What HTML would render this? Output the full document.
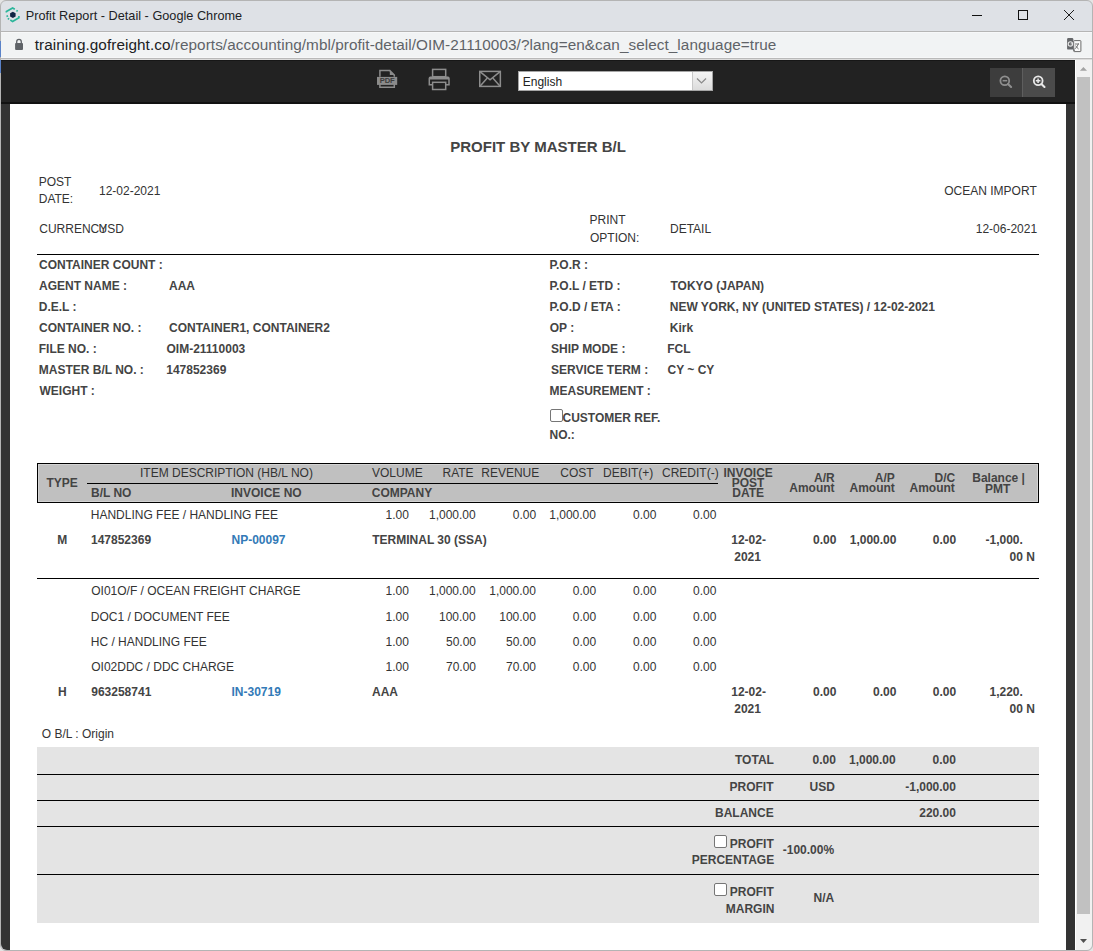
<!DOCTYPE html>
<html><head><meta charset="utf-8">
<style>
html,body{margin:0;padding:0;}
body{width:1093px;height:951px;overflow:hidden;position:relative;background:#e4e4e4;font-family:"Liberation Sans",sans-serif;}
.t{position:absolute;line-height:20px;white-space:pre;font-family:"Liberation Sans",sans-serif;}
.abs{position:absolute;}
#win{position:absolute;left:0;top:0;width:1091px;height:949px;background:#dee1e6;border-radius:6px;border:1px solid #b4b4b4;}
#addr{position:absolute;left:1px;top:32px;width:1091px;height:26px;background:#f1f3f4;}
#tb{position:absolute;left:1px;top:60px;width:1074px;height:42px;background:#222;border-top:1px solid #171717;box-sizing:border-box;}
#tbb{position:absolute;left:1px;top:102px;width:1074px;height:2px;background:#111;}
#lbar{position:absolute;left:1px;top:104px;width:9px;height:846px;background:#333;border-bottom-left-radius:6px;}
#rbar{position:absolute;left:1066px;top:104px;width:9px;height:846px;background:#333;}
#paper{position:absolute;left:10px;top:104px;width:1056px;height:846px;background:#fff;}
#sb{position:absolute;left:1075px;top:60px;width:16px;height:890px;background:#f1f1f1;border-bottom-right-radius:6px;border-left:1px solid #fff;}
#thumb{position:absolute;left:1077px;top:77px;width:13px;height:837px;background:#c1c1c1;}
.hl{position:absolute;height:1px;background:#000;}
#thead{position:absolute;left:37px;top:463px;width:1000px;height:38px;background:#c0c0c0;border:1px solid #000;box-shadow:inset 0 0 0 1px #d4d4d4;}
#sum{position:absolute;left:37px;top:747px;width:1002px;height:176px;background:#e4e4e4;}
.cb{position:absolute;width:11px;height:11px;border:1px solid #767676;border-radius:2px;background:#fff;box-sizing:content-box;}
#sel{position:absolute;left:518px;top:71px;width:193px;height:18px;background:#fff;border:1px solid #a6a6a6;}
#selbtn{position:absolute;left:692px;top:72px;width:19px;height:18px;background:linear-gradient(#f4f4f4,#dcdcdc);border-left:1px solid #c8c8c8;}
#zo{position:absolute;left:990px;top:68px;width:32px;height:29px;background:#3d3d3d;}
#zsep{position:absolute;left:1022px;top:68px;width:1px;height:29px;background:#5e5e5e;}
#zi{position:absolute;left:1023px;top:68px;width:32px;height:29px;background:#4b4b4b;}
</style></head><body>
<div id="win"></div>
<div class="abs" style="left:1px;top:31px;width:1091px;height:1px;background:#b5b5b5"></div>
<div id="addr"></div><div class="abs" style="left:0;top:41px;width:1px;height:16px;background:#5a82c8"></div><div class="abs" style="left:0;top:60px;width:1px;height:13px;background:#5a82c8"></div><div class="abs" style="left:1px;top:32px;width:1091px;height:1px;background:#f7f8f9"></div>
<div class="abs" style="left:1px;top:57px;width:1091px;height:1px;background:#f6f7f8"></div><div class="abs" style="left:1px;top:58px;width:1091px;height:1px;background:#b9b9b9"></div><div class="abs" style="left:1px;top:59px;width:1091px;height:1px;background:#dcdcdc"></div>
<div id="tb"></div>
<div id="tbb"></div>
<div id="lbar"></div>
<div id="rbar"></div>
<div id="paper"></div>
<div id="sb"></div>
<div id="thumb"></div>
<!-- scrollbar arrows -->
<svg class="abs" style="left:1075px;top:62px" width="16" height="12"><path d="M4.9 8.8 L8.45 4.9 L12 8.8 Z" fill="#a3a3a3"/></svg>
<svg class="abs" style="left:1075px;top:935px" width="16" height="12"><path d="M5 4 L8.5 8 L12 4 Z" fill="#505050"/></svg>
<!-- favicon -->
<svg class="abs" style="left:0;top:0" width="30" height="30" viewBox="0 0 30 30">
 <g fill="none" stroke="#2bb59a" stroke-width="1.7">
  <path d="M6.4 12.6 L6.4 11.5 L12.6 7.9 L14.8 9.2"/>
  <path d="M16.4 10.5 L17.7 11.3"/>
  <path d="M6.9 15.4 L7.6 16.8"/>
  <path d="M7.8 18.4 L9.1 19.2"/>
  <path d="M10.3 20.1 L12.6 21.4 L18.9 17.7 L18.9 16"/>
 </g>
 <path d="M12.85 11.7 L15.6 13.3 L15.6 16.5 L12.85 18.1 L10.1 16.5 L10.1 13.3 Z" fill="#0f2444"/>
</svg>
<!-- window controls -->
<div class="abs" style="left:972px;top:15px;width:10px;height:1px;background:#111"></div>
<div class="abs" style="left:1018px;top:10px;width:8px;height:8px;border:1px solid #111"></div>
<svg class="abs" style="left:1063px;top:9px" width="12" height="12"><path d="M1 1 L11 11 M11 1 L1 11" stroke="#111" stroke-width="0.95"/></svg>
<!-- lock -->
<svg class="abs" style="left:14px;top:38px" width="10" height="13" viewBox="0 0 10 13">
 <path d="M2.7 5.6 V3.7 A2.3 2.3 0 0 1 7.3 3.7 V5.6" fill="none" stroke="#5f6368" stroke-width="1.3"/>
 <rect x="1.1" y="5.1" width="7.9" height="6.9" rx="0.9" fill="#5f6368"/>
</svg>
<div class="t" style="left:34.8px;top:35px;font-size:15.3px;color:#5f6368;letter-spacing:0.063px"><span style="color:#202124">training.gofreight.co</span>/reports/accounting/mbl/profit-detail/OIM-21110003/?lang=en&amp;can_select_language=true</div>
<!-- translate icon -->
<svg class="abs" style="left:1066px;top:37px" width="16" height="16" viewBox="0 0 16 16">
 <rect x="7.7" y="3.6" width="7.2" height="11" rx="0.6" fill="#fafafa" stroke="#6a6a6a" stroke-width="1"/>
 <path d="M9 7 H13 M12.5 6.5 Q11.5 10 8.7 12 M9.6 8.6 Q11 11 12.6 12" stroke="#6a6a6a" stroke-width="0.9" fill="none"/>
 <rect x="1.1" y="1" width="6.2" height="11.6" rx="1.2" fill="#65676a"/>
 <path d="M7 12.4 L8.8 14.6 L8.8 12.4 Z" fill="#65676a"/>
 <circle cx="4.4" cy="6.9" r="2.2" fill="none" stroke="#e6e6e6" stroke-width="1.1"/>
 <path d="M4.6 6.9 H6.7" stroke="#e6e6e6" stroke-width="0.9"/>
</svg>
<!-- toolbar icons -->
<svg class="abs" style="left:374px;top:67px" width="26" height="24" viewBox="0 0 26 24">
 <path d="M5.9 17 V20.2 H20.3 V17 M5.9 9.8 V3.6 H15.8 L20.3 8.1 V9.8" fill="none" stroke="#8b8b8b" stroke-width="1.5"/>
 <path d="M15.8 3.6 V8.1 H20.3 Z" fill="#8b8b8b"/>
 <rect x="3" y="9.9" width="20.2" height="8" fill="#8b8b8b"/>
 <text x="13.1" y="16.3" font-family="Liberation Sans" font-size="7.6" font-weight="700" fill="#3c3c3c" text-anchor="middle" letter-spacing="-0.2">PDF</text>
</svg>
<svg class="abs" style="left:426px;top:66px" width="26" height="26" viewBox="0 0 26 26">
 <g fill="none" stroke="#8d8d8d" stroke-width="1.5">
  <rect x="6.6" y="3.4" width="13.1" height="7.3"/>
  <path d="M6.6 18.8 H3.3 V12.4 Q3.3 11.2 4.5 11.2 H21.8 Q23 11.2 23 12.4 V18.8 H19.7"/>
  <rect x="6.6" y="16.3" width="13.1" height="7.2"/>
 </g>
 <rect x="3.3" y="10.9" width="19.7" height="2.6" fill="#8d8d8d"/>
</svg>
<svg class="abs" style="left:476px;top:68px" width="28" height="22" viewBox="0 0 28 22">
 <g fill="none" stroke="#8d8d8d" stroke-width="1.5">
  <rect x="3.75" y="3.4" width="20.6" height="15"/>
  <path d="M4 3.6 L14.05 11.9 L24.1 3.6"/>
  <path d="M4 18.2 L11.3 10.1 M24.1 18.2 L16.8 10.1"/>
 </g>
</svg>
<div id="sel"></div>
<div id="selbtn"></div>
<svg class="abs" style="left:695px;top:76px" width="13" height="10"><path d="M2 2.5 L6.5 7 L11 2.5" fill="none" stroke="#8a8a8a" stroke-width="1.2"/></svg>
<div id="zo"></div><div id="zsep"></div><div id="zi"></div>
<svg class="abs" style="left:996px;top:72px" width="20" height="20" viewBox="0 0 20 20">
 <circle cx="8.8" cy="8.8" r="4.4" fill="none" stroke="#8f8f8f" stroke-width="1.8"/>
 <path d="M12 12 L15.1 15" stroke="#8f8f8f" stroke-width="2.1" stroke-linecap="round"/>
 <path d="M6.6 8.7 H11.2" stroke="#8f8f8f" stroke-width="1.5"/>
</svg>
<svg class="abs" style="left:1029px;top:72px" width="20" height="20" viewBox="0 0 20 20">
 <circle cx="9.2" cy="8.8" r="4.4" fill="none" stroke="#e8e8e8" stroke-width="1.8"/>
 <path d="M12.4 12 L15.5 15" stroke="#e8e8e8" stroke-width="2.1" stroke-linecap="round"/>
 <path d="M6.8 8.7 H11.4 M9.1 6.4 V11" stroke="#e8e8e8" stroke-width="1.5"/>
</svg>
<!-- page shapes -->
<div class="hl" style="left:37px;top:254px;width:1002px"></div>
<div class="cb" style="left:550px;top:409px"></div>
<div id="thead"></div>
<div class="hl" style="left:87px;top:483px;width:631px"></div>
<div class="hl" style="left:37px;top:578px;width:1002px"></div>
<div id="sum"></div>
<div class="hl" style="left:37px;top:774px;width:1002px"></div>
<div class="hl" style="left:37px;top:800px;width:1002px"></div>
<div class="hl" style="left:37px;top:826px;width:1002px"></div>
<div class="hl" style="left:37px;top:874px;width:1002px"></div>
<div class="cb" style="left:714px;top:835px"></div>
<div class="cb" style="left:714px;top:883px"></div>
<div class="t" style="left:25.75px;top:6px;font-size:12.7px;font-weight:400;color:#202124;letter-spacing:0.017px;">Profit Report - Detail - Google Chrome</div>
<div class="t" style="left:522.75px;top:72px;font-size:12px;font-weight:400;color:#222;">English</div>
<div class="t" style="left:450.25px;top:137px;font-size:15px;font-weight:700;color:#444;">PROFIT BY MASTER B/L</div>
<div class="t" style="left:38.75px;top:172px;font-size:12px;font-weight:400;color:#333;">POST</div>
<div class="t" style="left:38.75px;top:189px;font-size:12px;font-weight:400;color:#333;">DATE:</div>
<div class="t" style="left:99.0px;top:181px;font-size:12px;font-weight:400;color:#333;">12-02-2021</div>
<div class="t" style="left:39.25px;top:219px;font-size:12px;font-weight:400;color:#333;">CURRENCY</div>
<div class="t" style="left:98.5px;top:219px;font-size:12px;font-weight:400;color:#333;">USD</div>
<div class="t" style="left:589.5px;top:210px;font-size:12px;font-weight:400;color:#333;">PRINT</div>
<div class="t" style="left:590.0px;top:228px;font-size:12px;font-weight:400;color:#333;">OPTION:</div>
<div class="t" style="left:670.0px;top:219px;font-size:12px;font-weight:400;color:#333;">DETAIL</div>
<div class="t" style="left:944.25px;top:181px;font-size:12px;font-weight:400;color:#333;">OCEAN IMPORT</div>
<div class="t" style="left:975.75px;top:219px;font-size:12px;font-weight:400;color:#333;">12-06-2021</div>
<div class="t" style="left:39.0px;top:255px;font-size:12px;font-weight:700;color:#444;">CONTAINER COUNT :</div>
<div class="t" style="left:39.0px;top:276px;font-size:12px;font-weight:700;color:#444;">AGENT NAME :</div>
<div class="t" style="left:169.0px;top:276px;font-size:12px;font-weight:700;color:#444;">AAA</div>
<div class="t" style="left:38.75px;top:297px;font-size:12px;font-weight:700;color:#444;">D.E.L :</div>
<div class="t" style="left:39.0px;top:318px;font-size:12px;font-weight:700;color:#444;">CONTAINER NO. :</div>
<div class="t" style="left:169.0px;top:318px;font-size:12px;font-weight:700;color:#444;">CONTAINER1, CONTAINER2</div>
<div class="t" style="left:38.75px;top:339px;font-size:12px;font-weight:700;color:#444;">FILE NO. :</div>
<div class="t" style="left:166.5px;top:339px;font-size:12px;font-weight:700;color:#444;">OIM-21110003</div>
<div class="t" style="left:38.75px;top:360px;font-size:12px;font-weight:700;color:#444;">MASTER B/L NO. :</div>
<div class="t" style="left:166.25px;top:360px;font-size:12px;font-weight:700;color:#444;">147852369</div>
<div class="t" style="left:39.5px;top:381px;font-size:12px;font-weight:700;color:#444;">WEIGHT :</div>
<div class="t" style="left:549.5px;top:255px;font-size:12px;font-weight:700;color:#444;">P.O.R :</div>
<div class="t" style="left:549.5px;top:276px;font-size:12px;font-weight:700;color:#444;">P.O.L / ETD :</div>
<div class="t" style="left:670.5px;top:276px;font-size:12px;font-weight:700;color:#444;">TOKYO (JAPAN)</div>
<div class="t" style="left:549.5px;top:297px;font-size:12px;font-weight:700;color:#444;">P.O.D / ETA :</div>
<div class="t" style="left:669.75px;top:297px;font-size:12px;font-weight:700;color:#444;">NEW YORK, NY (UNITED STATES) / 12-02-2021</div>
<div class="t" style="left:549.75px;top:318px;font-size:12px;font-weight:700;color:#444;">OP :</div>
<div class="t" style="left:669.75px;top:318px;font-size:12px;font-weight:700;color:#444;">Kirk</div>
<div class="t" style="left:551.0px;top:339px;font-size:12px;font-weight:700;color:#444;">SHIP MODE :</div>
<div class="t" style="left:667.25px;top:339px;font-size:12px;font-weight:700;color:#444;">FCL</div>
<div class="t" style="left:551.0px;top:360px;font-size:12px;font-weight:700;color:#444;">SERVICE TERM :</div>
<div class="t" style="left:667.5px;top:360px;font-size:12px;font-weight:700;color:#444;">CY ~ CY</div>
<div class="t" style="left:549.5px;top:381px;font-size:12px;font-weight:700;color:#444;">MEASUREMENT :</div>
<div class="t" style="left:562.5px;top:408px;font-size:12px;font-weight:700;color:#444;">CUSTOMER REF.</div>
<div class="t" style="left:549.5px;top:425px;font-size:12px;font-weight:700;color:#444;">NO.:</div>
<div class="t" style="left:46.5px;top:473px;font-size:12px;font-weight:700;color:#444;">TYPE</div>
<div class="t" style="left:140.0px;top:463px;font-size:12px;font-weight:400;color:#333;">ITEM DESCRIPTION (HB/L NO)</div>
<div class="t" style="left:372.0px;top:463px;font-size:12px;font-weight:400;color:#333;">VOLUME</div>
<div class="t" style="left:442.5px;top:463px;font-size:12px;font-weight:400;color:#333;">RATE</div>
<div class="t" style="left:481.25px;top:463px;font-size:12px;font-weight:400;color:#333;">REVENUE</div>
<div class="t" style="left:560.25px;top:463px;font-size:12px;font-weight:400;color:#333;">COST</div>
<div class="t" style="left:603.0px;top:463px;font-size:12px;font-weight:400;color:#333;">DEBIT(+)</div>
<div class="t" style="left:662.0px;top:463px;font-size:12px;font-weight:400;color:#333;">CREDIT(-)</div>
<div class="t" style="left:91.0px;top:483px;font-size:12px;font-weight:700;color:#444;">B/L NO</div>
<div class="t" style="left:231.0px;top:483px;font-size:12px;font-weight:700;color:#444;">INVOICE NO</div>
<div class="t" style="left:371.75px;top:483px;font-size:12px;font-weight:700;color:#444;">COMPANY</div>
<div class="t" style="left:723.5px;top:463px;font-size:12px;font-weight:700;color:#444;">INVOICE</div>
<div class="t" style="left:731.75px;top:473px;font-size:12px;font-weight:700;color:#444;">POST</div>
<div class="t" style="left:732.25px;top:483px;font-size:12px;font-weight:700;color:#444;">DATE</div>
<div class="t" style="left:814.0px;top:468px;font-size:12px;font-weight:700;color:#444;">A/R</div>
<div class="t" style="left:789.25px;top:478px;font-size:12px;font-weight:700;color:#444;">Amount</div>
<div class="t" style="left:874.75px;top:468px;font-size:12px;font-weight:700;color:#444;">A/P</div>
<div class="t" style="left:849.5px;top:478px;font-size:12px;font-weight:700;color:#444;">Amount</div>
<div class="t" style="left:934.5px;top:468px;font-size:12px;font-weight:700;color:#444;">D/C</div>
<div class="t" style="left:909.5px;top:478px;font-size:12px;font-weight:700;color:#444;">Amount</div>
<div class="t" style="left:972.25px;top:468px;font-size:12px;font-weight:700;color:#444;">Balance |</div>
<div class="t" style="left:985.0px;top:479px;font-size:12px;font-weight:700;color:#444;">PMT</div>
<div class="t" style="left:90.75px;top:505px;font-size:12px;font-weight:400;color:#333;">HANDLING FEE / HANDLING FEE</div>
<div class="t" style="left:385.5px;top:505px;font-size:12px;font-weight:400;color:#333;">1.00</div>
<div class="t" style="left:429.0px;top:505px;font-size:12px;font-weight:400;color:#333;">1,000.00</div>
<div class="t" style="left:512.75px;top:505px;font-size:12px;font-weight:400;color:#333;">0.00</div>
<div class="t" style="left:549.25px;top:505px;font-size:12px;font-weight:400;color:#333;">1,000.00</div>
<div class="t" style="left:633.0px;top:505px;font-size:12px;font-weight:400;color:#333;">0.00</div>
<div class="t" style="left:693.0px;top:505px;font-size:12px;font-weight:400;color:#333;">0.00</div>
<div class="t" style="left:57.25px;top:530px;font-size:12px;font-weight:700;color:#444;">M</div>
<div class="t" style="left:91.0px;top:530px;font-size:12px;font-weight:700;color:#444;">147852369</div>
<div class="t" style="left:231.5px;top:530px;font-size:12px;font-weight:700;color:#337ab7;">NP-00097</div>
<div class="t" style="left:372.25px;top:530px;font-size:12px;font-weight:700;color:#444;">TERMINAL 30 (SSA)</div>
<div class="t" style="left:731.25px;top:530px;font-size:12px;font-weight:700;color:#444;">12-02-</div>
<div class="t" style="left:734.25px;top:547px;font-size:12px;font-weight:700;color:#444;">2021</div>
<div class="t" style="left:813.0px;top:530px;font-size:12px;font-weight:700;color:#444;">0.00</div>
<div class="t" style="left:849.75px;top:530px;font-size:12px;font-weight:700;color:#444;">1,000.00</div>
<div class="t" style="left:932.75px;top:530px;font-size:12px;font-weight:700;color:#444;">0.00</div>
<div class="t" style="left:985.5px;top:530px;font-size:12px;font-weight:700;color:#444;">-1,000.</div>
<div class="t" style="left:1009.5px;top:547px;font-size:12px;font-weight:700;color:#444;">00 N</div>
<div class="t" style="left:91.25px;top:581px;font-size:12px;font-weight:400;color:#333;">OI01O/F / OCEAN FREIGHT CHARGE</div>
<div class="t" style="left:385.5px;top:581px;font-size:12px;font-weight:400;color:#333;">1.00</div>
<div class="t" style="left:429.0px;top:581px;font-size:12px;font-weight:400;color:#333;">1,000.00</div>
<div class="t" style="left:489.25px;top:581px;font-size:12px;font-weight:400;color:#333;">1,000.00</div>
<div class="t" style="left:572.75px;top:581px;font-size:12px;font-weight:400;color:#333;">0.00</div>
<div class="t" style="left:633.0px;top:581px;font-size:12px;font-weight:400;color:#333;">0.00</div>
<div class="t" style="left:693.0px;top:581px;font-size:12px;font-weight:400;color:#333;">0.00</div>
<div class="t" style="left:90.75px;top:607px;font-size:12px;font-weight:400;color:#333;">DOC1 / DOCUMENT FEE</div>
<div class="t" style="left:385.5px;top:607px;font-size:12px;font-weight:400;color:#333;">1.00</div>
<div class="t" style="left:439.0px;top:607px;font-size:12px;font-weight:400;color:#333;">100.00</div>
<div class="t" style="left:499.25px;top:607px;font-size:12px;font-weight:400;color:#333;">100.00</div>
<div class="t" style="left:572.75px;top:607px;font-size:12px;font-weight:400;color:#333;">0.00</div>
<div class="t" style="left:633.0px;top:607px;font-size:12px;font-weight:400;color:#333;">0.00</div>
<div class="t" style="left:693.0px;top:607px;font-size:12px;font-weight:400;color:#333;">0.00</div>
<div class="t" style="left:90.75px;top:632px;font-size:12px;font-weight:400;color:#333;">HC / HANDLING FEE</div>
<div class="t" style="left:385.5px;top:632px;font-size:12px;font-weight:400;color:#333;">1.00</div>
<div class="t" style="left:446.0px;top:632px;font-size:12px;font-weight:400;color:#333;">50.00</div>
<div class="t" style="left:506.0px;top:632px;font-size:12px;font-weight:400;color:#333;">50.00</div>
<div class="t" style="left:572.75px;top:632px;font-size:12px;font-weight:400;color:#333;">0.00</div>
<div class="t" style="left:633.0px;top:632px;font-size:12px;font-weight:400;color:#333;">0.00</div>
<div class="t" style="left:693.0px;top:632px;font-size:12px;font-weight:400;color:#333;">0.00</div>
<div class="t" style="left:91.25px;top:657px;font-size:12px;font-weight:400;color:#333;">OI02DDC / DDC CHARGE</div>
<div class="t" style="left:385.5px;top:657px;font-size:12px;font-weight:400;color:#333;">1.00</div>
<div class="t" style="left:446.0px;top:657px;font-size:12px;font-weight:400;color:#333;">70.00</div>
<div class="t" style="left:506.0px;top:657px;font-size:12px;font-weight:400;color:#333;">70.00</div>
<div class="t" style="left:572.75px;top:657px;font-size:12px;font-weight:400;color:#333;">0.00</div>
<div class="t" style="left:633.0px;top:657px;font-size:12px;font-weight:400;color:#333;">0.00</div>
<div class="t" style="left:693.0px;top:657px;font-size:12px;font-weight:400;color:#333;">0.00</div>
<div class="t" style="left:58.0px;top:682px;font-size:12px;font-weight:700;color:#444;">H</div>
<div class="t" style="left:91.25px;top:682px;font-size:12px;font-weight:700;color:#444;">963258741</div>
<div class="t" style="left:231.5px;top:682px;font-size:12px;font-weight:700;color:#337ab7;">IN-30719</div>
<div class="t" style="left:372.0px;top:682px;font-size:12px;font-weight:700;color:#444;">AAA</div>
<div class="t" style="left:731.25px;top:682px;font-size:12px;font-weight:700;color:#444;">12-02-</div>
<div class="t" style="left:734.25px;top:699px;font-size:12px;font-weight:700;color:#444;">2021</div>
<div class="t" style="left:813.0px;top:682px;font-size:12px;font-weight:700;color:#444;">0.00</div>
<div class="t" style="left:873.0px;top:682px;font-size:12px;font-weight:700;color:#444;">0.00</div>
<div class="t" style="left:932.75px;top:682px;font-size:12px;font-weight:700;color:#444;">0.00</div>
<div class="t" style="left:989.5px;top:682px;font-size:12px;font-weight:700;color:#444;">1,220.</div>
<div class="t" style="left:1009.5px;top:699px;font-size:12px;font-weight:700;color:#444;">00 N</div>
<div class="t" style="left:41.75px;top:724px;font-size:12px;font-weight:400;color:#333;">O B/L : Origin</div>
<div class="t" style="left:735.0px;top:750px;font-size:12px;font-weight:700;color:#444;">TOTAL</div>
<div class="t" style="left:812.5px;top:750px;font-size:12px;font-weight:700;color:#444;">0.00</div>
<div class="t" style="left:849.0px;top:750px;font-size:12px;font-weight:700;color:#444;">1,000.00</div>
<div class="t" style="left:932.5px;top:750px;font-size:12px;font-weight:700;color:#444;">0.00</div>
<div class="t" style="left:729.5px;top:777px;font-size:12px;font-weight:700;color:#444;">PROFIT</div>
<div class="t" style="left:809.5px;top:777px;font-size:12px;font-weight:700;color:#444;">USD</div>
<div class="t" style="left:905.25px;top:777px;font-size:12px;font-weight:700;color:#444;">-1,000.00</div>
<div class="t" style="left:715.0px;top:803px;font-size:12px;font-weight:700;color:#444;">BALANCE</div>
<div class="t" style="left:919.25px;top:803px;font-size:12px;font-weight:700;color:#444;">220.00</div>
<div class="t" style="left:729.75px;top:834px;font-size:12px;font-weight:700;color:#444;">PROFIT</div>
<div class="t" style="left:691.75px;top:850px;font-size:12px;font-weight:700;color:#444;">PERCENTAGE</div>
<div class="t" style="left:782.75px;top:840px;font-size:12px;font-weight:700;color:#444;">-100.00%</div>
<div class="t" style="left:729.75px;top:882px;font-size:12px;font-weight:700;color:#444;">PROFIT</div>
<div class="t" style="left:725.75px;top:899px;font-size:12px;font-weight:700;color:#444;">MARGIN</div>
<div class="t" style="left:813.5px;top:888px;font-size:12px;font-weight:700;color:#444;">N/A</div>
</body></html>
